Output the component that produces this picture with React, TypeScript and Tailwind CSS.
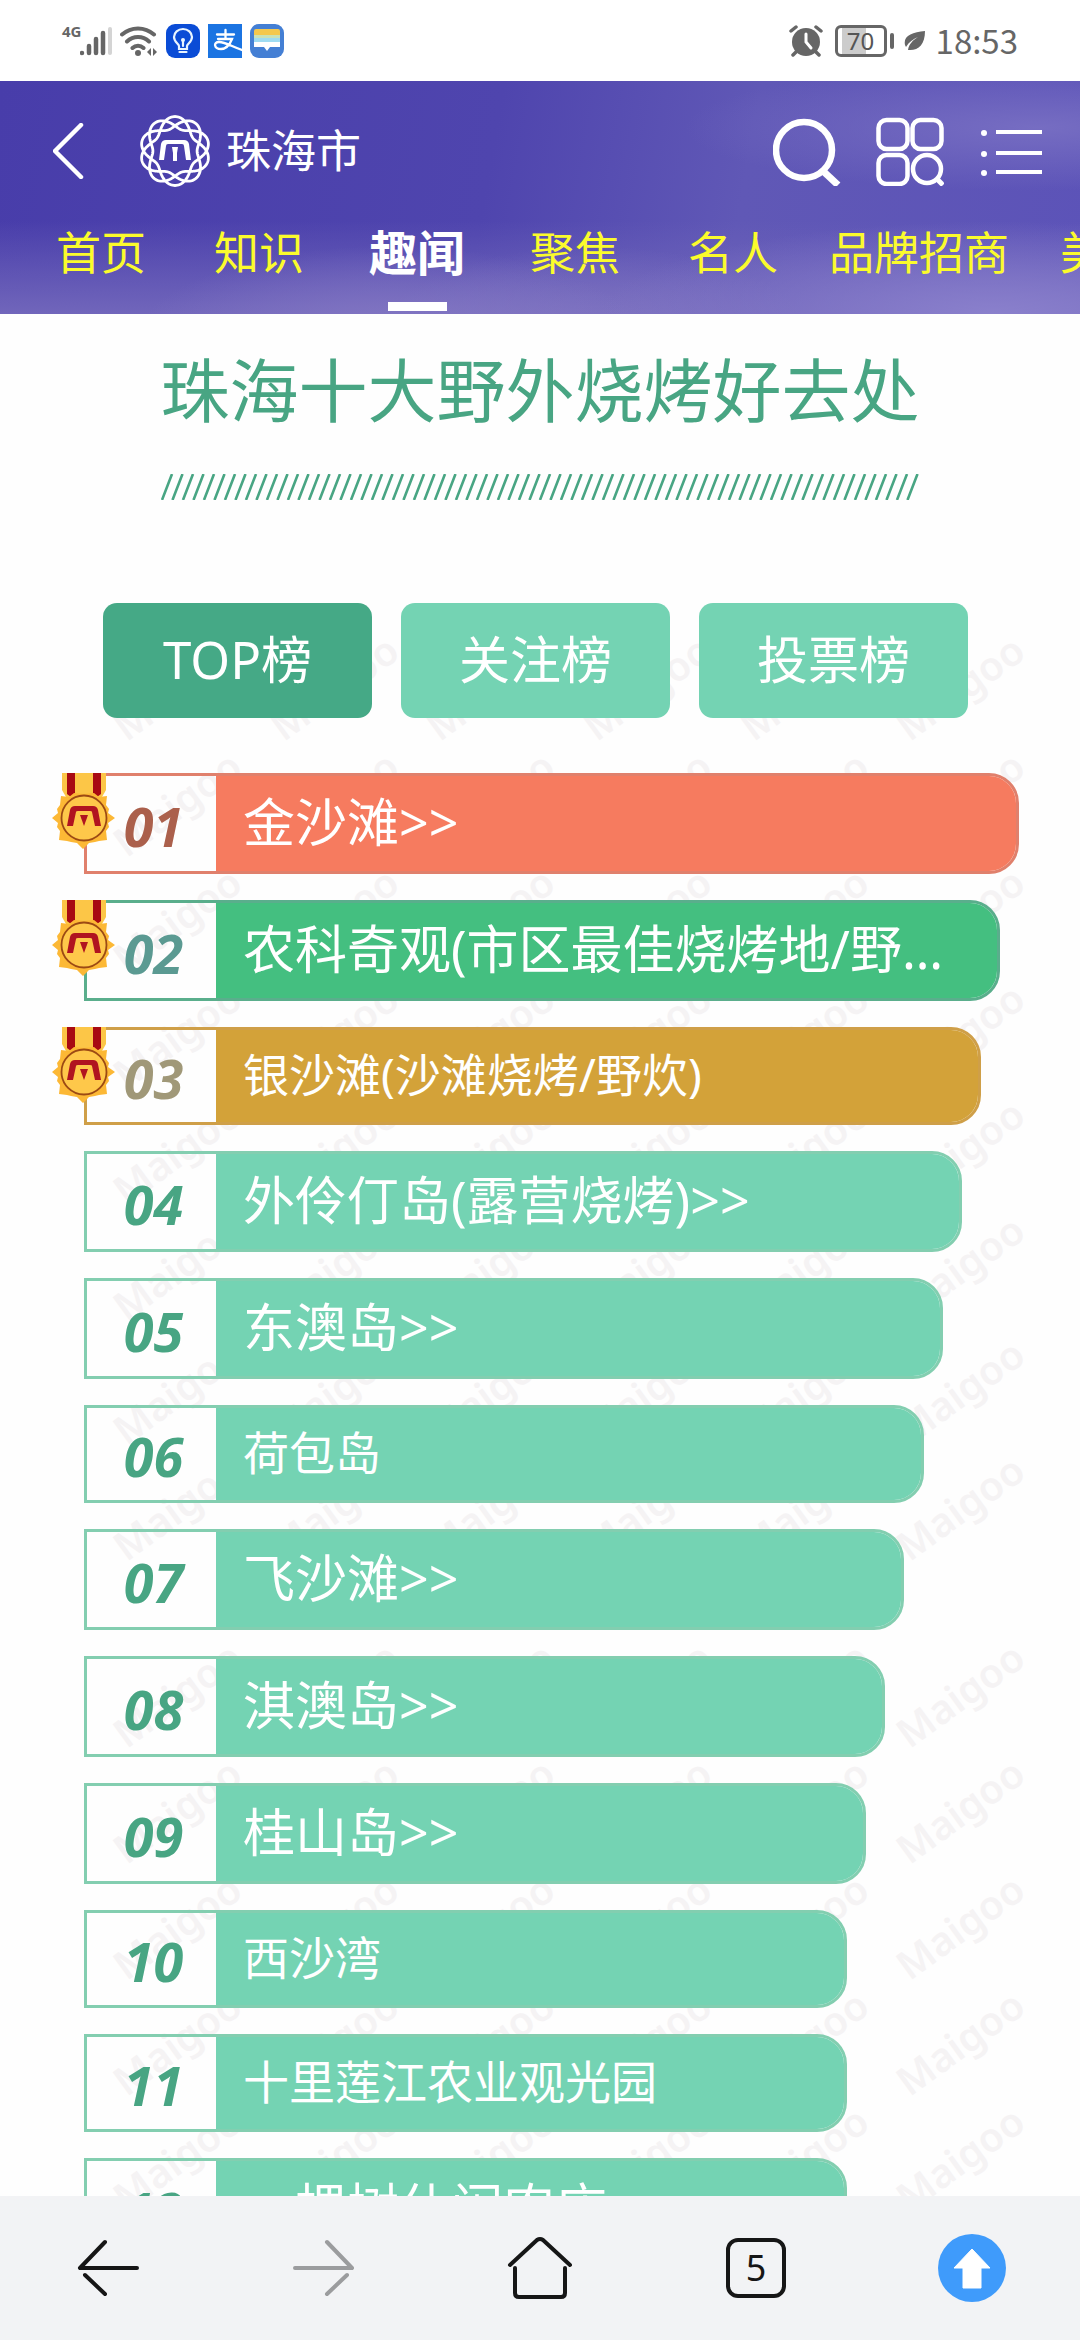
import React from "react";

type Entry = {
  rank: string;
  name: string;
  large: boolean;
  width: string;
  border: string;
  fill: string;
  numberTone: string;
  medal?: boolean;
};

const GREEN = { border: "border-[#83ceb0]", fill: "bg-[#74d3b3]", numberTone: "text-[#48a583]" };

const entries: Entry[] = [
  { rank: "01", name: "金沙滩>>", large: true, width: "w-[98%]", border: "border-[#e0806c]", fill: "bg-[#f67b5f]", numberTone: "text-[#ab604c]", medal: true },
  { rank: "02", name: "农科奇观(市区最佳烧烤地/野炊)>>", large: true, width: "w-[96%]", border: "border-[#5aae8c]", fill: "bg-[#44bf80]", numberTone: "text-[#5b9a92]", medal: true },
  { rank: "03", name: "银沙滩(沙滩烧烤/野炊)", large: false, width: "w-[94%]", border: "border-[#cf9f48]", fill: "bg-[#d3a239]", numberTone: "text-[#a09878]", medal: true },
  { rank: "04", name: "外伶仃岛(露营烧烤)>>", large: true, width: "w-[92%]", ...GREEN },
  { rank: "05", name: "东澳岛>>", large: true, width: "w-[90%]", ...GREEN },
  { rank: "06", name: "荷包岛", large: false, width: "w-[88%]", ...GREEN },
  { rank: "07", name: "飞沙滩>>", large: true, width: "w-[86%]", ...GREEN },
  { rank: "08", name: "淇澳岛>>", large: true, width: "w-[84%]", ...GREEN },
  { rank: "09", name: "桂山岛>>", large: true, width: "w-[82%]", ...GREEN },
  { rank: "10", name: "西沙湾", large: false, width: "w-[80%]", ...GREEN },
  { rank: "11", name: "十里莲江农业观光园", large: false, width: "w-[80%]", ...GREEN },
  { rank: "12", name: "一棵树休闲农庄", large: true, width: "w-[80%]", ...GREEN },
];

const tabs = ["首页", "知识", "趣闻", "聚焦", "名人", "品牌招商", "美食"];
const boards = ["TOP榜", "关注榜", "投票榜"];

function StatusBar() {
  return (
    <div className="flex h-[81px] shrink-0 items-center justify-between bg-white px-[62px] text-[#666]">
      <div className="flex items-center gap-2">
        <div className="flex items-start">
          <span className="-mt-1 w-[18px] text-[15px] leading-5 font-bold">4G</span>
          <svg width="32" height="32" viewBox="0 0 32 32" aria-hidden="true">
            <path d="M2 28v0M9 21v7M16 14v14M23 8v20" stroke="#666" strokeWidth="4.500" strokeLinecap="round" />
            <rect x="28" y="2" width="4" height="28" rx="2" fill="#d4d4d4" />
          </svg>
        </div>
        <svg width="38" height="34" viewBox="0 0 38 34" fill="none" stroke="#666" strokeWidth="4" strokeLinecap="round" aria-hidden="true">
          <path d="M2 10.500a24 24 0 0 1 32 0M7 17.500a16 16 0 0 1 22 0M12.500 24a8 8 0 0 1 11 0" />
          <circle cx="18" cy="29" r="3" fill="#666" stroke="none" />
          <path d="M31 24v8l-4-4zM33 24v8l4-4z" fill="#666" stroke="none" />
        </svg>
        <svg width="34" height="34" viewBox="0 0 34 34" aria-hidden="true">
          <rect width="34" height="34" rx="9" fill="#0a4cd6" />
          <g fill="none" stroke="#e8f4ff" strokeWidth="2.200" strokeLinecap="round">
            <path d="M13 22c0-2-5-4-5-9a9 8 0 0 1 18 0c0 5-5 7-5 9v3h-8zM13.500 28h7M17 16v6" />
          </g>
          <circle cx="17" cy="16" r="2" fill="#e8f4ff" />
        </svg>
        <svg width="34" height="34" viewBox="0 0 34 34" aria-hidden="true">
          <rect width="34" height="34" fill="#1b74e2" />
          <path
            d="M9 10.500h17M17.500 6v9M10 15h14c-2 5-6 10-11 10-7 0-8-7-2-7 6 0 12 4 23 8"
            fill="none"
            stroke="#fff"
            strokeWidth="2.300"
            strokeLinecap="round"
          />
        </svg>
        <svg width="34" height="34" viewBox="0 0 34 34" aria-hidden="true">
          <rect width="34" height="34" rx="9" fill="#447fd4" />
          <rect x="4" y="5" width="26" height="9" rx="2" fill="#f4c84d" />
          <path d="M4 11h26v5H4z" fill="#c9e2b8" />
          <path d="M4 14h26v4H4z" fill="#9fdcf2" />
          <path d="M4 18h26v5H20l-3 4-3-4H4z" fill="#fff" />
        </svg>
      </div>
      <div className="flex items-center">
        <svg width="34" height="32" viewBox="0 0 34 32" aria-hidden="true">
          <circle cx="17" cy="17" r="14" fill="#666" />
          <path d="M2 6l5-4M32 6l-5-4M7 27l-3 3M27 27l3 3" stroke="#666" strokeWidth="3.500" strokeLinecap="round" />
          <path d="M17 9v8l5 6" fill="none" stroke="#fff" strokeWidth="3" strokeLinecap="round" />
        </svg>
        <div className="ml-3 flex h-8 w-[52px] items-center justify-center rounded-md border-3 border-[#666] bg-[linear-gradient(90deg,#fff_4px,#ccc_4px,#ccc_28px,#fff_28px)] text-[24px] leading-6 text-[#555]">
          70
        </div>
        <div className="ml-[3px] h-4 w-1 rounded-sm bg-[#666]" />
        <svg className="ml-[10px]" width="22" height="22" viewBox="0 0 22 22" aria-hidden="true">
          <path d="M21 1C8 2-1 6 1 15l1 2C5 12 9 9 14 7 9 10 5 14 4 20c10 1 17-5 17-19z" fill="#666" />
        </svg>
        <span className="ml-[10px] pb-[2px] font-['Noto_Sans_CJK_SC','Noto_Sans',sans-serif] text-[33px] leading-10">18:53</span>
      </div>
    </div>
  );
}

// Ten-lobed woven ring: one closed curve that circles the centre three times.
const weavePath = Array.from({ length: 541 }, (_, i) => {
  const t = (i / 540) * Math.PI * 6;
  const r = 28.3 + 6.2 * Math.cos((t * 10) / 3);
  const x = (36 + r * Math.sin(t)).toFixed(2);
  const y = (36 - r * Math.cos(t)).toFixed(2);
  return `${i === 0 ? "M" : "L"}${x} ${y}`;
}).join("");

function CityLogo() {
  return (
    <svg width="72" height="72" viewBox="0 0 72 72" aria-hidden="true">
      <path d={weavePath} fill="none" stroke="#fff" strokeWidth="2.800" />
      <path d="M20 45l2-16q1-4 5-4h18q4 0 5 4l2 16h-5l-2-14q0-2-2-2H29q-2 0-2 2l-2 14z" fill="#fff" />
      <path d="M33 32h6l-1 6v8h-4v-8z" fill="#fff" />
    </svg>
  );
}

function Header() {
  return (
    <header className="shrink-0 overflow-hidden bg-[radial-gradient(ellipse_at_92%_100%,#8a80cc_0,transparent_28%),radial-gradient(ellipse_at_36%_112%,#8579c4_0,transparent_26%),radial-gradient(ellipse_at_55%_112%,#8176c2_0,transparent_26%),radial-gradient(ellipse_at_96%_20%,#766dc2_0,transparent_24%),linear-gradient(180deg,transparent_60%,#7166bb_100%),linear-gradient(100deg,#483daa_0%,#4f45ae_45%,#6058b6_68%,#5c53b8_100%)]">
      <div className="flex h-[140px] items-center pr-[38px] pl-[53px]">
        <button type="button" aria-label="返回">
          <svg width="32" height="56" viewBox="0 0 32 56" fill="none" stroke="#fff" strokeWidth="4.500" strokeLinecap="round" strokeLinejoin="round">
            <path d="M28 2L2 28l26 26" />
          </svg>
        </button>
        <a href="#city" className="ml-[54px] flex items-center gap-[15px] text-[45px] leading-[60px] text-white">
          <CityLogo />
          珠海市
        </a>
        <div className="ml-auto flex items-center">
          <button type="button" aria-label="搜索">
            <svg width="68" height="70" viewBox="0 0 68 70" fill="none" stroke="#fff">
              <circle cx="31" cy="34" r="28" strokeWidth="6.500" />
              <path d="M50 55l15 14" strokeWidth="7" />
            </svg>
          </button>
          <button type="button" aria-label="分类" className="ml-[35px]">
            <svg width="68" height="70" viewBox="0 0 68 70" fill="none" stroke="#fff" strokeWidth="4.500">
              <rect x="2.500" y="4" width="29" height="29" rx="8" />
              <rect x="36.500" y="4" width="29" height="29" rx="8" />
              <rect x="2.500" y="39" width="29" height="29" rx="8" />
              <circle cx="51" cy="53" r="14" />
              <path d="M61 63l6 6" strokeWidth="5" />
            </svg>
          </button>
          <button type="button" aria-label="菜单" className="ml-[36px]">
            <svg width="62" height="50" viewBox="0 0 62 50" fill="none" stroke="#fff" strokeWidth="4">
              <path d="M16 6h46M16 27h46M16 46h46" />
              <g fill="#fff" stroke="none">
                <circle cx="4" cy="7" r="3" />
                <circle cx="4" cy="28" r="3" />
                <circle cx="4" cy="47" r="3" />
              </g>
            </svg>
          </button>
        </div>
      </div>
      <nav className="flex overflow-hidden pb-[3px] pl-[22px] whitespace-nowrap">
        {tabs.map((tab) => {
          const active = tab === "趣闻";
          return (
            <a
              key={tab}
              href={`#${tab}`}
              aria-current={active ? "page" : undefined}
              className={
                active
                  ? "flex min-w-[158px] shrink-0 flex-col items-center px-[17px] text-[48px] leading-[64px] font-bold text-white"
                  : "flex min-w-[158px] shrink-0 flex-col items-center px-[17px] text-[45px] leading-[64px] text-[#fbfb2c]"
              }
            >
              {tab}
              <span className={active ? "mt-[17px] h-[9px] w-[59px] bg-white" : "mt-[17px] h-[9px]"} />
            </a>
          );
        })}
      </nav>
    </header>
  );
}

function WatermarkBlock({ rows }: { rows: number }) {
  return (
    <div className="grid grid-cols-6">
      {Array.from({ length: rows * 6 }, (_, i) => (
        <div key={i} className="flex h-[116px] items-center">
          <span className="w-[144px] -rotate-36 text-center text-[40px] leading-10 font-semibold text-[#f5f3f4]">Maigoo</span>
        </div>
      ))}
    </div>
  );
}

function Watermark() {
  return (
    <div aria-hidden="true" className="pointer-events-none absolute inset-x-0 top-[316px] pr-[36px] pl-[104px] select-none">
      <WatermarkBlock rows={6} />
      <div className="mt-2">
        <WatermarkBlock rows={2} />
      </div>
      <div className="mt-[71px]">
        <WatermarkBlock rows={5} />
      </div>
    </div>
  );
}

function Medal() {
  return (
    <svg className="absolute -top-[3px] -left-[35px]" width="64" height="77" viewBox="0 0 64 77" aria-hidden="true">
      <path d="M10 0h44v17l-4 7H14l-4-7z" fill="#fcc647" />
      <path d="M15 0h8v24h-4l-4-3zM41 0h8v21l-4 3h-4z" fill="#a80a12" />
      <path
        d="M9 23l8 1 5-4 10 1 10-1 5 4 8-1-1 9 3 4-1 4 7 5-7 5 1 4-3 4 1 9-8 1-4 1-6 1-6 6-6-6-6-1-4-1-8-1 1-9-3-4 1-4-6-5 6-5-1-4 3-4z"
        fill="#fcb835"
      />
      <circle cx="32" cy="45" r="22.500" fill="#fec84a" stroke="#9c4a14" strokeWidth="1.800" />
      <path d="M15 53l3-16q1-4 5-4h18q4 0 5 4l3 16h-6l-3-14q0-1-2-1H26q-2 0-2 1l-3 14z" fill="#b01420" />
      <path d="M28 42h8l-4 11z" fill="#b01420" />
    </svg>
  );
}

function RankRow({ entry }: { entry: Entry }) {
  return (
    <li className={entry.width}>
      <a
        href={`#rank-${entry.rank}`}
        className={`relative flex rounded-r-[30px] border-3 text-white ${entry.large ? "h-[101px]" : "h-[98px]"} ${entry.border}`}
      >
        <span className={`flex w-[129px] shrink-0 items-center justify-center pt-1 pl-1 text-[54px] leading-[60px] font-bold italic ${entry.numberTone}`}>
          {entry.rank}
        </span>
        <span className={`flex min-w-0 flex-1 items-center rounded-r-[27px] pr-[32px] pb-1 pl-[27px] ${entry.fill}`}>
          <span className={`truncate ${entry.large ? "text-[52px] leading-[70px]" : "text-[46px] leading-[66px]"}`}>{entry.name}</span>
        </span>
        {entry.medal && <Medal />}
      </a>
    </li>
  );
}

const SLASH_COUNT = 72;
const slashPath = Array.from({ length: SLASH_COUNT }, (_, i) => `M${1 + i * 10.5} 26L${11 + i * 10.5} 0`).join("");

function BottomBar() {
  const item = "flex items-center justify-center";
  return (
    <footer className="grid h-36 shrink-0 grid-cols-5 bg-[#f2f3f5]">
      <button type="button" aria-label="后退" className={item}>
        <svg width="62" height="58" viewBox="0 0 62 58" fill="none" stroke="#161616" strokeWidth="4" strokeLinecap="round" strokeLinejoin="round">
          <path d="M28 3L3 29h57M8 36l20 19" />
        </svg>
      </button>
      <button type="button" aria-label="前进" className={item}>
        <svg width="62" height="58" viewBox="0 0 62 58" fill="none" stroke="#9b9c9e" strokeWidth="4" strokeLinecap="round" strokeLinejoin="round">
          <path d="M34 3l25 26H2M54 36L34 55" />
        </svg>
      </button>
      <button type="button" aria-label="主页" className={item}>
        <svg width="66" height="64" viewBox="0 0 66 64" fill="none" stroke="#161616" strokeWidth="4" strokeLinecap="round" strokeLinejoin="round">
          <path d="M3 29L30 4q3-2 6 0l27 25M8 32v25q0 4 4 4h42q4 0 4-4V32" />
        </svg>
      </button>
      <button type="button" aria-label="标签页" className={item}>
        <span className="flex size-[60px] items-center justify-center rounded-xl border-4 border-[#161616] text-[36px] leading-10 text-[#161616]">5</span>
      </button>
      <button type="button" aria-label="回到顶部" className={item}>
        <svg width="68" height="68" viewBox="0 0 68 68">
          <circle cx="34" cy="34" r="34" fill="#3f9bfb" />
          <path d="M34 15l18 19h-9v20H25V34h-9z" fill="#fff" stroke="#fff" strokeLinejoin="round" />
        </svg>
      </button>
    </footer>
  );
}

export default function App() {
  return (
    <div className="flex h-screen flex-col overflow-hidden bg-white font-['Noto_Sans','Noto_Sans_CJK_SC',sans-serif]">
      <StatusBar />
      <Header />
      <main className="relative min-h-0 flex-1 overflow-x-hidden overflow-y-auto bg-[#fefefe] pb-10 [scrollbar-width:none]">
        <Watermark />
        <div className="relative flex flex-col">
          <div className="mt-[26px] flex flex-col self-center">
            <h1 className="text-[69px] leading-[100px] text-[#48a583]">珠海十大野外烧烤好去处</h1>
            <svg className="mt-[34px] h-[26px] w-full" viewBox="0 0 759 26" preserveAspectRatio="none" aria-hidden="true">
              <path d={slashPath} stroke="#48a583" strokeWidth="2.600" />
            </svg>
          </div>
          <div className="mt-[103px] grid grid-cols-3 gap-[29px] pr-[112px] pl-[103px]">
            {boards.map((board, i) => (
              <button
                key={board}
                type="button"
                className={`h-[115px] rounded-[14px] pb-1 text-[51px] leading-[70px] text-white ${i === 0 ? "bg-[#45a986]" : "bg-[#74d3b3]"}`}
              >
                {board}
              </button>
            ))}
          </div>
          <ol className="mt-[55px] flex flex-col gap-[26px] pr-[42px] pl-[84px]">
            {entries.map((entry) => (
              <RankRow key={entry.rank} entry={entry} />
            ))}
          </ol>
        </div>
      </main>
      <BottomBar />
    </div>
  );
}
